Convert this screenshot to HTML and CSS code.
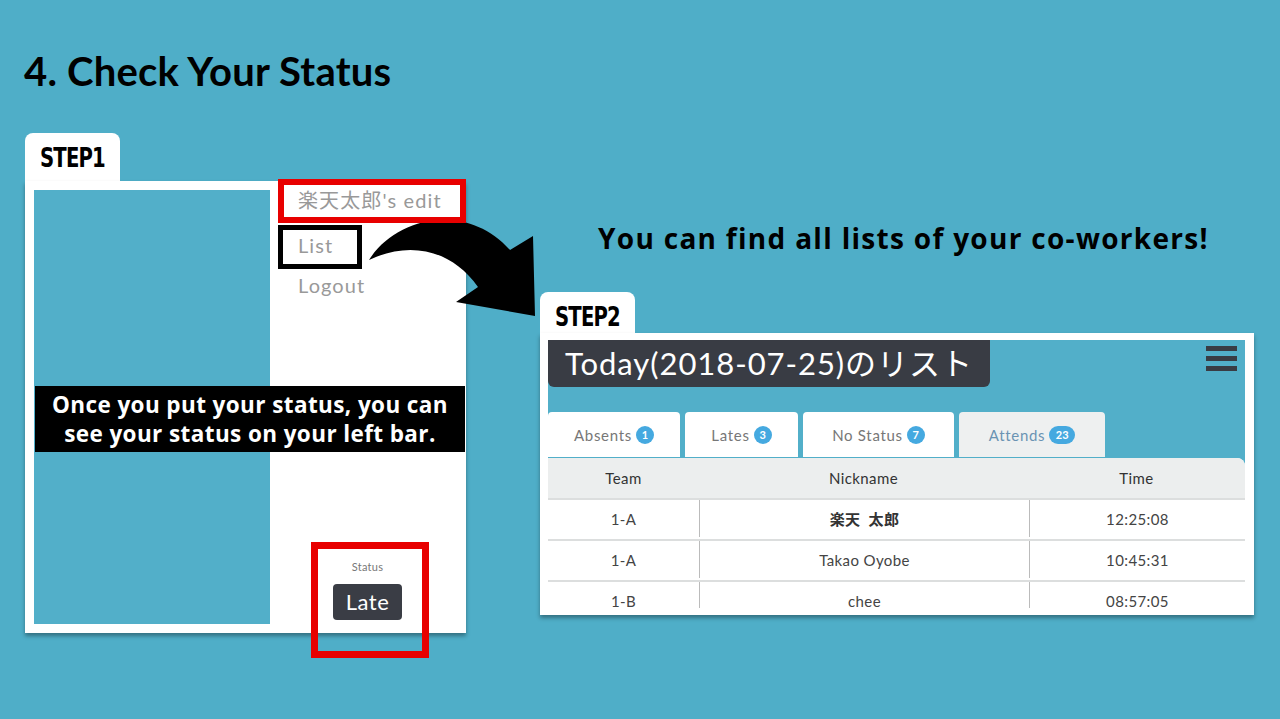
FILE: index.html
```html
<!DOCTYPE html>
<html>
<head>
<meta charset="utf-8">
<link rel="stylesheet" href="styles.css">
</head>
<body>
<div class="slide">
  <h1 class="title">4. Check Your Status</h1>
  <div class="row">
    <div class="left">
      <div class="tab tab1"><span class="step">STEP1</span></div>
      <div class="panel1">
        <div class="sidebar"></div>
        <div class="menu">
          <div class="mi mi-edit">楽天太郎's edit</div>
          <div class="mi mi-list">List</div>
          <div class="mi mi-logout">Logout</div>
          <div class="spacer"></div>
          <div class="status">
            <div class="status-label">Status</div>
            <div class="late">Late</div>
          </div>
        </div>
        <div class="caption">Once you put your status, you can<br>see your status on your left bar.</div>
        <div class="status-mark"></div>
      </div>
    </div>
    <div class="right">
      <p class="subtitle">You can find all lists of your co-workers!</p>
      <div class="tab tab2"><span class="step">STEP2</span></div>
      <div class="panel2">
        <div class="app">
          <div class="apphead">
            <div class="badge-title">Today(2018-07-25)のリスト</div>
            <div class="burger"><span></span><span></span><span></span></div>
          </div>
          <div class="tabs">
            <div class="t">Absents <span class="cnt">1</span></div>
            <div class="t">Lates <span class="cnt">3</span></div>
            <div class="t">No Status <span class="cnt">7</span></div>
            <div class="t active">Attends <span class="cnt wide">23</span></div>
          </div>
          <div class="table">
            <div class="tr th"><div class="c1">Team</div><div class="c2">Nickname</div><div class="c3">Time</div></div>
            <div class="tr"><div class="c1">1-A</div><div class="c2 jp">楽天&nbsp;&nbsp;太郎</div><div class="c3">12:25:08</div></div>
            <div class="tr"><div class="c1">1-A</div><div class="c2">Takao Oyobe</div><div class="c3">10:45:31</div></div>
            <div class="tr"><div class="c1">1-B</div><div class="c2">chee</div><div class="c3">08:57:05</div></div>
          </div>
        </div>
      </div>
    </div>
  </div>
  <svg class="arrow" width="200" height="120" viewBox="360 210 200 120">
    <path d="M369 260 C 395 218, 465 200, 510 250 L 533 236 L 535 316 L 456 302 L 478 287 C 452 250, 410 240, 369 260 Z" fill="#000"/>
  </svg>
</div>
</body>
</html>
```
FILE: styles.css
```css
html, body {
  margin: 0;
  padding: 0;
}
body {
  background: #4faec8;
  width: 1280px;
  height: 719px;
  overflow: hidden;
}
.slide {
  position: relative;
  width: 1280px;
  height: 719px;
  background: #4faec8;
  font-family: "Open Sans", "Noto Sans CJK JP", sans-serif;
}
.title {
  margin: 0;
  padding: 47px 0 0 24px;
  font-family: "Lato", sans-serif;
  font-size: 40px;
  line-height: 48px;
  font-weight: 700;
  color: #000;
  letter-spacing: 0.2px;
}
.row {
  display: flex;
  align-items: flex-start;
  margin-top: 38px;
  padding-left: 25px;
}
.left {
  width: 441px;
  display: flex;
  flex-direction: column;
}
.tab {
  background: #fff;
  width: 95px;
  border-radius: 8px 8px 0 0;
  box-sizing: border-box;
}
.step {
  display: inline-block;
  font-family: "DejaVu Sans Condensed", "DejaVu Sans", sans-serif;
  font-weight: 700;
  font-size: 26px;
  line-height: 28px;
  letter-spacing: -1px;
  color: #000;
  transform: scaleX(0.84);
  transform-origin: left center;
}
.tab1 {
  height: 48px;
  padding: 11px 0 0 15px;
}
.panel1 {
  position: relative;
  background: #fff;
  height: 452px;
  box-sizing: border-box;
  padding: 9px;
  display: flex;
  box-shadow: 0 3px 4px rgba(0,0,0,0.35);
}
.sidebar {
  width: 236px;
  background: #52afc9;
}
.menu {
  flex: 1;
  margin-left: 8px;
  display: flex;
  flex-direction: column;
  font-family: "Lato", "Noto Sans CJK JP", sans-serif;
  color: #999;
  font-size: 20px;
  letter-spacing: 1.1px;
}
.mi {
  box-sizing: border-box;
}
.mi-edit {
  margin-top: -11px;
  margin-right: -9px;
  height: 44px;
  border: 6px solid #e80000;
  padding-left: 14px;
  line-height: 30px;
  background: #fff;
  position: relative;
  z-index: 1;
}
.mi-list {
  margin-top: 2px;
  width: 84px;
  height: 44px;
  border: 5px solid #000;
  padding-left: 15px;
  line-height: 30px;
}
.mi-logout {
  padding-left: 20px;
  line-height: 28px;
  margin-top: 2px;
}
.spacer {
  flex: 1;
}
.status {
  display: flex;
  flex-direction: column;
  align-items: center;
  margin-bottom: 4px;
  letter-spacing: 0;
}
.status-label {
  font-size: 11px;
  color: #777;
  line-height: 14px;
  margin-bottom: 10px;
  letter-spacing: 0.3px;
}
.late {
  background: #3a3d45;
  color: #fff;
  width: 69px;
  height: 36px;
  border-radius: 4px;
  text-align: center;
  line-height: 36px;
  font-size: 22px;
  letter-spacing: 0.5px;
}
.caption {
  position: absolute;
  left: 10px;
  top: 205px;
  width: 430px;
  height: 66px;
  background: #000;
  color: #fff;
  font-family: "Open Sans", sans-serif;
  font-weight: 700;
  font-size: 22.5px;
  line-height: 29px;
  letter-spacing: 0.4px;
  text-align: center;
  box-sizing: border-box;
  padding-top: 4px;
  white-space: nowrap;
}
.status-mark {
  position: absolute;
  left: 286px;
  top: 361px;
  width: 118px;
  height: 116px;
  border: 7px solid #e80000;
  box-sizing: border-box;
}
.right {
  margin-left: 74px;
  width: 714px;
  display: flex;
  flex-direction: column;
}
.subtitle {
  margin: 88px 0 0 58px;
  font-size: 28px;
  font-weight: 700;
  line-height: 34px;
  letter-spacing: 1.3px;
  color: #000;
  white-space: nowrap;
}
.tab2 {
  margin-top: 37px;
  height: 41px;
  padding: 11px 0 0 15px;
}
.panel2 {
  background: #fff;
  height: 282px;
  box-sizing: border-box;
  padding: 7px 9px 7px 8px;
  box-shadow: 0 3px 4px rgba(0,0,0,0.35);
}
.app {
  background: #52afc9;
  height: 100%;
  overflow: hidden;
  font-family: "Lato", "Noto Sans CJK JP", sans-serif;
}
.apphead {
  display: flex;
  justify-content: space-between;
  align-items: flex-start;
}
.badge-title {
  width: 442px;
  height: 47px;
  background: #393c44;
  color: #fff;
  border-radius: 0 0 6px 6px;
  font-size: 31px;
  line-height: 46px;
  letter-spacing: 0.95px;
  padding-left: 17px;
  box-sizing: border-box;
  white-space: nowrap;
}
.burger {
  display: flex;
  flex-direction: column;
  gap: 5px;
  width: 31px;
  margin: 6px 8px 0 0;
}
.burger span {
  display: block;
  height: 5px;
  background: #393c44;
}
.tabs {
  display: flex;
  gap: 5px;
  margin-top: 25px;
  height: 45px;
}
.t {
  background: #fff;
  border-radius: 4px 4px 0 0;
  font-size: 15px;
  letter-spacing: 0.7px;
  color: #777;
  display: flex;
  align-items: center;
  justify-content: center;
  gap: 4px;
}
.t:nth-child(1) { width: 132px; }
.t:nth-child(2) { width: 113px; }
.t:nth-child(3) { width: 151px; }
.t:nth-child(4) { width: 146px; }
.t.active {
  background: #eef0f0;
  color: #6a93b3;
}
.cnt {
  display: inline-block;
  min-width: 18px;
  height: 18px;
  border-radius: 9px;
  background: #45a9e0;
  color: #fff;
  font-size: 11px;
  line-height: 18px;
  text-align: center;
  font-weight: 700;
  letter-spacing: 0;
}
.cnt.wide {
  min-width: 26px;
}
.table {
  margin-top: 1px;
  background: #fff;
  border-radius: 0 8px 0 0;
  overflow: hidden;
}
.tr {
  display: flex;
  height: 41px;
  box-sizing: border-box;
  border-top: 2px solid #dcdede;
  padding-bottom: 2px;
  font-size: 15px;
  letter-spacing: 0.4px;
  color: #444;
  align-items: stretch;
}
.tr > div {
  display: flex;
  align-items: center;
  justify-content: center;
}
.tr.th {
  border-top: 0;
  padding-bottom: 0;
  height: 40px;
  background: #eceeee;
  color: #333;
}
.c1 { width: 151px; }
.c2 { width: 329px; border-left: 1px solid #bbb; }
.c3 { flex: 1; border-left: 1px solid #bbb; }
.th .c2, .th .c3 { border-left: 0; }
.jp { font-weight: 700; color: #333; }
.arrow {
  position: absolute;
  left: 360px;
  top: 210px;
}
```
